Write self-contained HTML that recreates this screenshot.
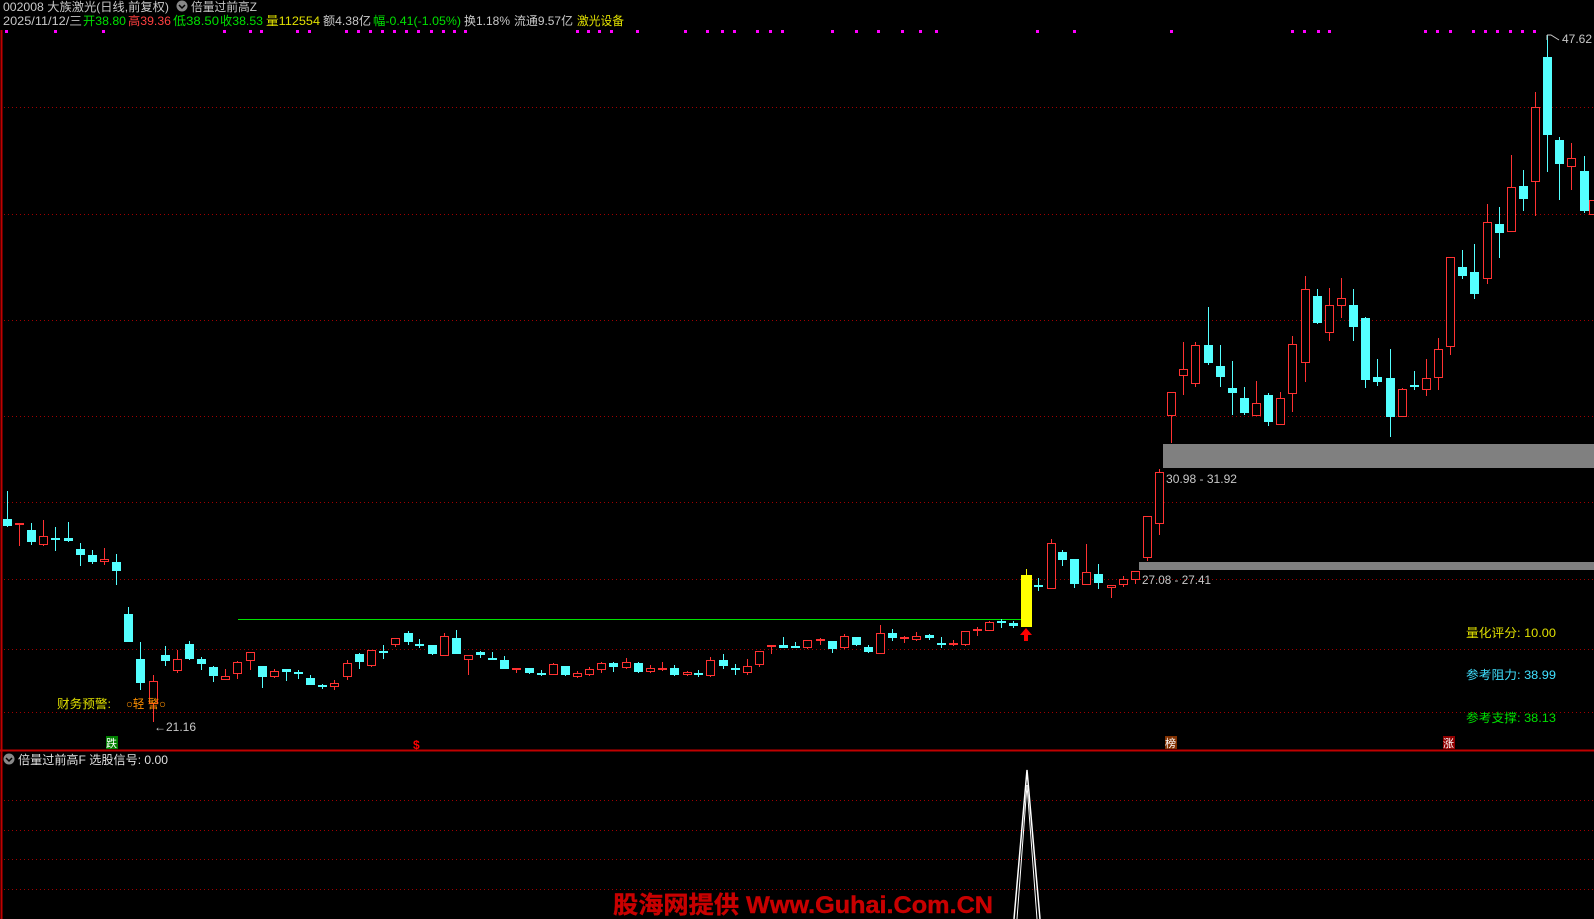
<!DOCTYPE html>
<html><head><meta charset="utf-8"><style>
html,body{margin:0;padding:0;background:#000;width:1594px;height:919px;overflow:hidden}
svg{display:block}
text{font-family:"Liberation Sans","WenQuanYi Zen Hei","Noto Sans CJK SC",sans-serif;font-size:12px}
</style></head><body>
<svg id="s" width="1594" height="919" viewBox="0 0 1594 919" xmlns="http://www.w3.org/2000/svg">
<rect width="1594" height="919" fill="#000"/>
<g stroke="#a00000" stroke-width="1" stroke-dasharray="1 3">
<line x1="4" y1="107.5" x2="1594" y2="107.5"/><line x1="4" y1="214.5" x2="1594" y2="214.5"/>
<line x1="4" y1="320.5" x2="1594" y2="320.5"/><line x1="4" y1="416.5" x2="1594" y2="416.5"/>
<line x1="4" y1="502.5" x2="1594" y2="502.5"/><line x1="4" y1="579.5" x2="1594" y2="579.5"/>
<line x1="4" y1="649.5" x2="1594" y2="649.5"/><line x1="4" y1="712.5" x2="1594" y2="712.5"/>
<line x1="4" y1="800.5" x2="1594" y2="800.5"/><line x1="4" y1="830.5" x2="1594" y2="830.5"/>
<line x1="4" y1="859.5" x2="1594" y2="859.5"/><line x1="4" y1="889.5" x2="1594" y2="889.5"/>
</g>
<line x1="1.5" y1="30" x2="1.5" y2="919" stroke="#c00000" stroke-width="2"/>
<line x1="0" y1="750.5" x2="1594" y2="750.5" stroke="#c00000" stroke-width="2"/>
<rect x="1163" y="444" width="431" height="24" fill="#808080"/>
<rect x="1139" y="562" width="455" height="8" fill="#808080"/>
<line x1="238" y1="619.5" x2="1027" y2="619.5" stroke="#00e000" stroke-width="1"/>
<g id="cd"></g>
<g id="dots" fill="#ff00ff"></g>
<path d="M1026 628 L1020 635 L1024 635 L1024 641 L1028 641 L1028 635 L1032 635 Z" fill="#ff0000"/>
<polyline points="1014,919 1027,770 1040,919" fill="none" stroke="#fff" stroke-width="1.5"/>
<polyline points="1017,919 1027,785 1037,919" fill="none" stroke="#fff" stroke-width="1"/>
<!-- header -->
<text x="3" y="11" fill="#c8c8c8" textLength="166" lengthAdjust="spacingAndGlyphs">002008 大族激光(日线,前复权)</text>
<circle cx="182" cy="6" r="5.5" fill="#888"/><path d="M179 5 L182 8 L185 5" stroke="#000" stroke-width="1.5" fill="none"/>
<text x="191" y="11" fill="#c8c8c8" textLength="66" lengthAdjust="spacingAndGlyphs">倍量过前高Z</text>
<text x="3" y="25" fill="#c8c8c8" textLength="79" lengthAdjust="spacingAndGlyphs">2025/11/12/三</text>
<text x="83" y="25" fill="#00e000" textLength="43" lengthAdjust="spacingAndGlyphs">开38.80</text>
<text x="128" y="25" fill="#ff4040" textLength="43" lengthAdjust="spacingAndGlyphs">高39.36</text>
<text x="173" y="25" fill="#00e000" textLength="46" lengthAdjust="spacingAndGlyphs">低38.50</text>
<text x="220" y="25" fill="#00e000" textLength="43" lengthAdjust="spacingAndGlyphs">收38.53</text>
<text x="266" y="25" fill="#e0e000" textLength="54" lengthAdjust="spacingAndGlyphs">量112554</text>
<text x="323" y="25" fill="#c8c8c8" textLength="48" lengthAdjust="spacingAndGlyphs">额4.38亿</text>
<text x="373" y="25" fill="#00e000" textLength="88" lengthAdjust="spacingAndGlyphs">幅-0.41(-1.05%)</text>
<text x="464" y="25" fill="#c8c8c8" textLength="46" lengthAdjust="spacingAndGlyphs">换1.18%</text>
<text x="514" y="25" fill="#c8c8c8" textLength="59" lengthAdjust="spacingAndGlyphs">流通9.57亿</text>
<text x="577" y="25" fill="#e0e000" textLength="47" lengthAdjust="spacingAndGlyphs">激光设备</text>
<!-- labels -->
<text x="1562" y="43" fill="#c8c8c8">47.62</text>
<path d="M1547 35 L1547 40 M1547 35 L1551 35 L1559 40" stroke="#c8c8c8" fill="none"/>
<text x="1166" y="483" fill="#c8c8c8" textLength="71" lengthAdjust="spacingAndGlyphs">30.98 - 31.92</text>
<text x="1142" y="584" fill="#c8c8c8" textLength="69" lengthAdjust="spacingAndGlyphs">27.08 - 27.41</text>
<text x="57" y="708" fill="#e0e000" textLength="54" lengthAdjust="spacingAndGlyphs">财务预警:</text>
<text x="126" y="708" fill="#ff9000" textLength="40" lengthAdjust="spacingAndGlyphs">○轻 警○</text>
<text x="154" y="731" fill="#c8c8c8">←21.16</text>
<rect x="106" y="736" width="12" height="13" fill="#008000"/><text x="106" y="747" fill="#fff" style="font-size:11px">跌</text>
<text x="413" y="749" fill="#ff0000" font-weight="bold">$</text>
<rect x="1165" y="736" width="12" height="13" fill="#803000"/><text x="1165" y="747" fill="#fff" style="font-size:11px">榜</text>
<rect x="1443" y="736" width="12" height="13" fill="#900000"/><text x="1443" y="747" fill="#fff" style="font-size:11px">涨</text>
<text x="1466" y="637" fill="#e0e000" textLength="90" lengthAdjust="spacingAndGlyphs">量化评分: 10.00</text>
<text x="1466" y="679" fill="#40e0ff" textLength="90" lengthAdjust="spacingAndGlyphs">参考阻力: 38.99</text>
<text x="1466" y="722" fill="#00e000" textLength="90" lengthAdjust="spacingAndGlyphs">参考支撑: 38.13</text>
<circle cx="9" cy="759" r="5.5" fill="#888"/><path d="M6 758 L9 761 L12 758" stroke="#000" stroke-width="1.5" fill="none"/>
<text x="18" y="764" fill="#e0e0e0" textLength="150" lengthAdjust="spacingAndGlyphs">倍量过前高F 选股信号: 0.00</text>
<text x="613" y="913" fill="#c80000" stroke="#c80000" stroke-width="0.4" font-weight="bold" style="font-size:24px" textLength="380" lengthAdjust="spacingAndGlyphs">股海网提供 Www.Guhai.Com.CN</text>
</svg>
<script>
var D=[[7,'c',519,526,491,527],[19,'r',523,524,523,546],[31,'c',530,542,523,545],[43,'r',536,545,520,546],[55,'c',538,539,527,551],[68,'c',538,541,522,542],[80,'c',549,555,543,566],[92,'c',555,562,550,564],[104,'r',559,562,548,565],[116,'c',562,571,554,585],[128,'c',614,642,607,642],[140,'c',659,683,642,690],[153,'r',681,704,675,722],[165,'c',655,661,646,666],[177,'r',659,671,650,673],[189,'c',644,659,641,660],[201,'c',659,664,657,670],[213,'c',667,676,666,682],[225,'r',676,680,669,680],[237,'r',662,674,661,679],[250,'r',652,661,652,670],[262,'c',666,677,666,688],[274,'r',671,677,669,678],[286,'c',669,672,669,681],[298,'c',672,673,670,679],[310,'c',678,685,675,685],[322,'c',685,687,684,689],[334,'r',683,687,680,690],
[347,'r',663,677,660,680],[359,'c',654,662,653,669],[371,'r',650,666,650,667],[383,'c',651,652,645,659],[395,'r',638,645,638,647],[408,'c',633,642,631,645],[419,'c',644,645,639,648],[432,'c',645,654,645,655],[444,'r',636,656,633,656],[456,'c',638,654,630,654],[468,'r',655,660,655,675],[480,'c',652,655,651,658],[492,'c',658,660,652,660],[504,'c',660,669,656,669],[516,'r',668,670,668,673],[529,'c',668,673,668,674],[541,'c',673,674,670,676],[553,'r',664,675,663,675],[565,'c',666,675,666,676],[577,'r',673,677,671,678],[589,'r',669,675,667,676],[601,'r',663,670,662,673],[613,'c',663,667,662,672],[626,'r',662,668,658,669],[638,'c',663,672,662,673],[650,'r',668,672,665,673],[662,'r',668,669,662,671],[674,'c',668,675,665,676],[687,'r',672,675,671,676],[698,'c',673,674,670,677],[710,'r',660,676,657,677],
[723,'c',660,666,654,669],[735,'c',668,669,664,675],[747,'r',666,673,659,675],[759,'r',651,665,651,667],[771,'r',645,647,645,654],[783,'c',645,648,637,648],[795,'c',646,648,642,648],[807,'r',640,648,640,649],[820,'r',639,641,638,645],[832,'c',641,649,641,653],[844,'r',636,648,634,649],[856,'c',637,645,637,646],[868,'c',647,652,645,653],[880,'r',633,654,625,654],[892,'c',633,638,629,641],[904,'r',637,639,636,643],[916,'r',636,640,632,641],[929,'c',635,638,634,640],[941,'c',643,644,637,648],[953,'r',643,645,640,646],[965,'r',631,645,631,646],[977,'r',629,631,627,636],[989,'r',622,631,621,631],[1001,'c',621,623,619,628],[1013,'c',623,626,621,628],[1026,'y',575,627,569,627],
[1038,'c',585,587,578,591],[1051,'r',543,589,539,589],[1062,'c',552,560,550,566],[1074,'c',559,584,559,588],[1086,'r',572,585,544,585],[1098,'c',574,583,564,589],[1111,'r',585,588,585,598],[1123,'r',579,585,576,587],[1135,'r',571,580,571,584],[1147,'r',516,558,516,561],[1159,'r',472,524,469,535],[1171,'r',392,416,392,443],[1183,'r',369,376,342,395],[1195,'r',345,384,342,387],[1208,'c',345,363,307,365],[1220,'c',366,377,345,387],[1232,'c',388,393,361,415],[1244,'c',398,413,387,415],[1256,'r',403,416,381,416],[1268,'c',395,422,393,426],[1280,'r',398,425,392,425],[1292,'r',344,394,336,412],[1305,'r',289,363,276,382],[1317,'c',296,323,289,324],[1329,'r',305,333,288,341],[1341,'r',298,306,278,318],[1353,'c',305,327,289,341],[1365,'c',318,380,317,388],[1377,'c',377,382,359,386],[1390,'c',378,417,349,437],[1402,'r',389,417,388,417],[1414,'c',385,386,371,390],[1426,'r',378,390,359,396],[1438,'r',349,378,338,390],[1450,'r',257,347,257,355],[1462,'c',267,276,250,279],[1474,'c',272,294,244,299],[1487,'r',222,279,204,284],[1499,'c',224,233,207,258],[1511,'r',187,232,155,232],[1523,'c',186,199,170,211],[1535,'r',107,182,92,216],[1547,'c',57,135,35,172],[1559,'c',140,164,137,200],[1571,'r',158,167,143,190],[1584,'c',171,211,156,213],[1593,'r',200,215,200,215]];
var g=document.getElementById('cd'),h='';
D.forEach(function(d){var x=d[0],t=d[1],bt=d[2],bb=d[3],wt=d[4],wb=d[5];
var col=t=='r'?'#ff3232':(t=='y'?'#ffff00':'#54ffff');
h+='<line x1="'+(x+.5)+'" y1="'+wt+'" x2="'+(x+.5)+'" y2="'+wb+'" stroke="'+col+'" stroke-width="1"/>';
var w=t=='y'?11:9;
if(bb-bt<2){h+='<rect x="'+(x-4)+'" y="'+bt+'" width="'+w+'" height="2" fill="'+col+'"/>';}
else if(t=='r'){h+='<rect x="'+(x-3.5)+'" y="'+(bt+.5)+'" width="'+(w-1)+'" height="'+(bb-bt-1)+'" fill="#000" stroke="'+col+'" stroke-width="1"/>';}
else{var xx=t=='y'?x-5:x-4;h+='<rect x="'+xx+'" y="'+bt+'" width="'+w+'" height="'+(bb-bt)+'" fill="'+col+'"/>';}
});
g.innerHTML=h;
var X=[6,55,103,224,250,261,297,309,346,358,370,382,394,406,418,431,443,454,465,577,588,599,611,637,685,707,722,734,757,770,782,832,856,878,902,920,936,1037,1074,1171,1292,1304,1318,1329,1425,1437,1450,1473,1485,1497,1510,1522,1534],s='';
X.forEach(function(x){s+='<rect x="'+(x-1)+'" y="30" width="3" height="3"/>';});
document.getElementById('dots').innerHTML=s;
</script>
</body></html>
